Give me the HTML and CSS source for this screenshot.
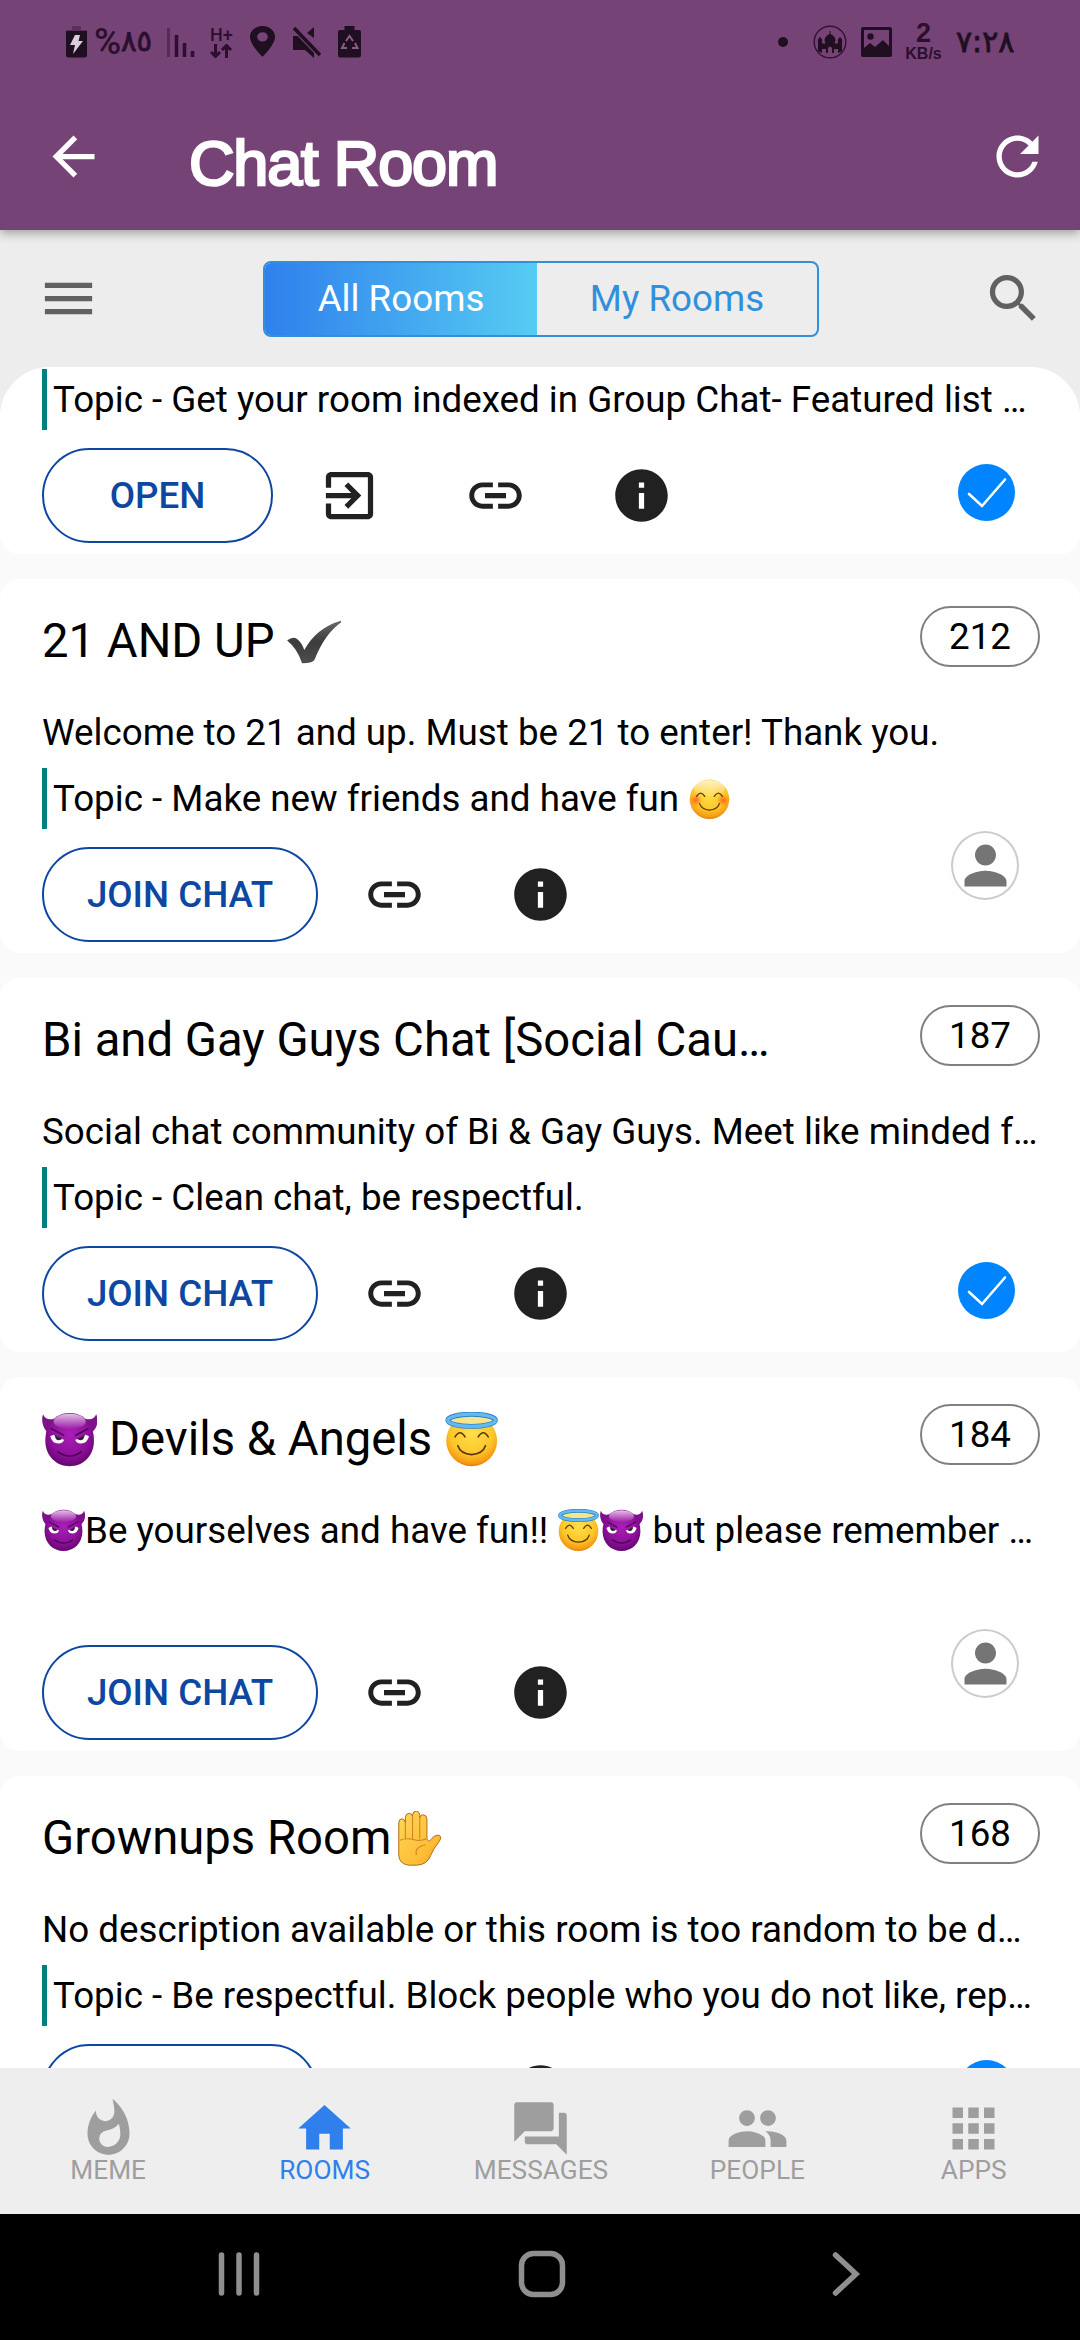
FILE: index.html
```html
<!DOCTYPE html>
<html lang="en">
<head>
<meta charset="utf-8">
<title>Chat Room</title>
<link rel="stylesheet" href="styles.css">
</head>
<body>
<svg class="defs" width="0" height="0" aria-hidden="true">
  <defs>
    <radialGradient id="g-yellow" cx=".5" cy=".35" r=".7">
      <stop offset="0" stop-color="#ffdf4a"/><stop offset=".6" stop-color="#fcc62a"/><stop offset=".85" stop-color="#f59a12"/><stop offset="1" stop-color="#c8620a"/>
    </radialGradient>
    <linearGradient id="g-shine" x1="0" y1="0" x2="0" y2="1">
      <stop offset="0" stop-color="#fff" stop-opacity=".75"/><stop offset="1" stop-color="#fff" stop-opacity="0"/>
    </linearGradient>
    <radialGradient id="g-blush"><stop offset="0" stop-color="#ff5a1f" stop-opacity=".9"/><stop offset="1" stop-color="#ff6a1f" stop-opacity="0"/></radialGradient>
    <radialGradient id="g-purple" cx=".5" cy=".4" r=".65">
      <stop offset="0" stop-color="#a81fb5"/><stop offset=".6" stop-color="#90109c"/><stop offset="1" stop-color="#5c0467"/>
    </radialGradient>
    <linearGradient id="g-hand" x1="0" y1="0" x2="1" y2="1">
      <stop offset="0" stop-color="#ffd75a"/><stop offset=".7" stop-color="#fdbd35"/><stop offset="1" stop-color="#ee8f1c"/>
    </linearGradient>
    <linearGradient id="g-tick" x1="0" y1="0" x2="0" y2="1">
      <stop offset="0" stop-color="#6a6a6a"/><stop offset=".5" stop-color="#3c3c3c"/><stop offset="1" stop-color="#4e4e4e"/>
    </linearGradient>
  </defs>
  <symbol id="devil" viewBox="0 0 100 100">
    <path d="M2 4C5 12 12 15 22 12L34 10C22 18 14 26 9 36C1 28 -2 14 2 4ZM98 4C95 12 88 15 78 12L66 10C78 18 86 26 91 36C101 28 102 14 98 4Z" fill="#7b1287"/>
    <path d="M50 2C78 2 94 24 94 52C94 80 74 98 50 98S6 80 6 52C6 24 22 2 50 2Z" fill="url(#g-purple)"/>
    <ellipse cx="50" cy="17" rx="29" ry="14" fill="url(#g-shine)"/>
    <path d="M15 44Q18 57 30 57Q38 56 40 50Q28 48 21 41ZM85 44Q82 57 70 57Q62 56 60 50Q72 48 79 41Z" fill="#fff"/>
    <path d="M23 42Q24 51 30 51Q35 51 36 48ZM77 42Q76 51 70 51Q65 51 64 48Z" fill="#33203a"/>
    <path d="M17 30Q27 36 39 42M83 30Q73 36 61 42M29 72Q50 87 71 72" fill="none" stroke="#43034b" stroke-width="2.6" stroke-linecap="round"/>
  </symbol>
  <symbol id="angel" viewBox="0 0 100 100">
    <ellipse cx="50" cy="52" rx="46" ry="46" fill="url(#g-yellow)"/>
    <ellipse cx="50" cy="15" rx="43" ry="11" fill="#f6e48e" stroke="#2b83c4" stroke-width="9"/>
    <ellipse cx="50" cy="15" rx="43" ry="11" fill="none" stroke="#64baf0" stroke-width="6"/>
    <path d="M20 45Q29 30 38 45M62 45Q71 30 80 45M25 61Q30 76 50 77Q70 76 75 61" fill="none" stroke="#5c3510" stroke-width="3" stroke-linecap="round"/>
  </symbol>
  <symbol id="smile" viewBox="0 0 100 100">
    <circle cx="50" cy="52" r="46" fill="url(#g-yellow)"/>
    <ellipse cx="50" cy="27" rx="36" ry="20" fill="url(#g-shine)"/>
    <circle cx="18" cy="54" r="15" fill="url(#g-blush)"/><circle cx="82" cy="54" r="15" fill="url(#g-blush)"/>
    <path d="M20 45Q29 30 39 45M61 45Q71 30 80 45M27 62Q32 76 50 77Q68 76 73 62" fill="none" stroke="#5c3510" stroke-width="3" stroke-linecap="round"/>
  </symbol>
  <symbol id="hand" viewBox="0 0 100 100">
    <path d="M14 66V21Q15 14 20 14Q25 15 26 21V11Q27 4 33 4Q39 5 39 10V7Q40 0 46 0Q52 1 52 8V12Q53 6 59 7Q65 8 65 15V50Q67 58 73 51Q77 45 82 44Q88 42 90 47Q91 50 86 57Q78 66 72 80Q65 98 46 98H32Q15 96 14 80Z" fill="url(#g-hand)" stroke="#b96a18" stroke-width="1.8"/>
    <path d="M26 20V51M39 10V50M52 12V50M16 53Q28 48 42 52Q54 55 64 50M46 80Q42 65 63 61" fill="none" stroke="#cf8425" stroke-width="2"/>
  </symbol>
  <symbol id="tick" viewBox="0 0 100 100">
    <path d="M2 48Q12 40 20 45Q29 52 33 65Q55 25 99 12L100 15Q70 36 52 82Q50 89 29 89Q20 62 2 48Z" fill="url(#g-tick)"/>
  </symbol>
  <symbol id="link" viewBox="0 0 24 24"><path d="M3.900 12c0-1.710 1.390-3.100 3.100-3.100h4V7H7c-2.760 0-5 2.240-5 5s2.240 5 5 5h4v-1.900H7c-1.710 0-3.100-1.390-3.100-3.100zM8 13h8v-2H8v2zm9-6h-4v1.900h4c1.710 0 3.100 1.390 3.100 3.100s-1.390 3.100-3.100 3.100h-4V17h4c2.760 0 5-2.240 5-5s-2.240-5-5-5z"/></symbol>
  <symbol id="info" viewBox="0 0 24 24"><path d="M12 2C6.480 2 2 6.480 2 12s4.480 10 10 10 10-4.480 10-10S17.520 2 12 2zm1 15h-2v-6h2v6zm0-8h-2V7h2v2z"/></symbol>
  <symbol id="enter" viewBox="0 0 24 24"><path d="M10.090 15.590L11.500 17l5-5-5-5-1.410 1.410L12.670 11H3v2h9.670l-2.580 2.590zM19 3H5c-1.110 0-2 .9-2 2v4h2V5h14v14H5v-4H3v4c0 1.100.89 2 2 2h14c1.100 0 2-.9 2-2V5c0-1.100-.9-2-2-2z"/></symbol>
  <symbol id="person" viewBox="0 0 24 24"><path d="M12 12c2.210 0 4-1.790 4-4s-1.790-4-4-4-4 1.790-4 4 1.790 4 4 4zm0 2c-2.670 0-8 1.340-8 4v2h16v-2c0-2.660-5.330-4-8-4z"/></symbol>
  <symbol id="verified" viewBox="0 0 57 57"><circle cx="28.500" cy="28.500" r="28.500" fill="#0084ff"/><path d="M11 30L24 42L47 15.500" fill="none" stroke="#fff" stroke-width="2.600" stroke-linecap="round"/></symbol>
</svg>

<div class="screen">
  <header class="header">
    <div class="status">
      <div class="status-group">
        <svg class="s-battery" viewBox="0 0 21 32"><path d="M6 0h9v4h6v4H0V4h6z" fill="#5a3159"/><path d="M0 5h21v24q0 2.500-2.500 2.500h-16Q0 31.500 0 29z" fill="#200f20"/><path d="M9 9h5l-1.500 6H17L7 28l2-9H4z" fill="#dccddc"/></svg>
        <span class="percent"><span class="sign">%</span><span class="digits">٨٥</span></span>
        <svg class="s-signal" viewBox="0 0 28 32"><path d="M1.500 2v29" stroke="#572a58" stroke-width="3"/><path d="M9.500 9v22M17.500 17v14M25.500 25v6" stroke="#2f0c33" stroke-width="3.500"/></svg>
        <div class="s-net"><span>H+</span><svg viewBox="0 0 22 14"><path d="M5.500 0v12M1 8l4.500 4.500L10 8M16.500 14V2M12 6l4.500-4.500L21 6" fill="none" stroke="#2c0f2f" stroke-width="3"/></svg></div>
        <svg class="s-pin" viewBox="5 2 14 20" preserveAspectRatio="none"><path d="M12 2C8.130 2 5 5.130 5 9c0 5.250 7 13 7 13s7-7.750 7-13c0-3.870-3.130-7-7-7zm0 10a3 3 0 1 1 0-6 3 3 0 0 1 0 6z"/></svg>
        <svg class="s-mute" viewBox="0 0 28 32"><path d="M21 1v11L14 7zM0 10h7l14 14v8l-9-8H0z"/><path d="M1 2L27 29" stroke="#754376" stroke-width="6"/><path d="M1 2L27 29" stroke="#200f20" stroke-width="3.500"/></svg>
        <svg class="s-recycle" viewBox="0 0 23 32"><path d="M6.500 0h10v4H21q2 0 2 2v23q0 2.500-2.500 2.500h-18Q0 31.500 0 29V6q0-2 2-2h4.500z"/><path d="M8 15l3.500-5 3.500 5M17 17l2.500 5H14M9 22H4l2.500-5" fill="none" stroke="#8a5b8b" stroke-width="2"/></svg>
      </div>
      <div class="status-group right">
        <svg class="s-dot" viewBox="0 0 10 10"><circle cx="5" cy="5" r="5"/></svg>
        <svg class="s-mosque" viewBox="0 0 34 34"><circle cx="17" cy="17" r="15.800" fill="none" stroke="#351339" stroke-width="1.500"/><path d="M16.500 6h1v3q5 2.500 5 6.500l-1 3h3.500v-2q-1-2 2-4.500 3 2.500 2 4.500v9.500q-1.500 1-4 2v-4h-4v4h-2v-5q-2-3-4 0v5h-2v-4H9v4q-2.500-1-4-2v-9.500q-1-2 2-4.500 3 2.500 2 4.500v2h3.500l-1-3q0-4 5-6.500z"/></svg>
        <svg class="s-image" viewBox="0 0 31 30"><path fill-rule="evenodd" d="M2 0h27q2 0 2 2v26q0 2-2 2H2q-2 0-2-2V2q0-2 2-2zM3 3v18l6-5 5 4 8-7 6 6V3z"/><circle cx="9.500" cy="9.500" r="3.200"/></svg>
        <div class="speed"><b>2</b><span>KB/s</span></div>
        <span class="clock">٧:٢٨</span>
      </div>
    </div>
    <div class="appbar">
      <svg class="icon" viewBox="0 0 24 24"><path d="M20 11H7.830l5.590-5.590L12 4l-8 8 8 8 1.410-1.410L7.830 13H20v-2z"/></svg>
      <h1 class="app-title">Chat Room</h1>
      <svg class="icon" viewBox="0 0 24 24"><path d="M17.650 6.350C16.200 4.900 14.210 4 12 4c-4.420 0-7.990 3.580-7.990 8s3.570 8 7.990 8c3.730 0 6.840-2.550 7.730-6h-2.080c-.82 2.330-3.040 4-5.650 4-3.310 0-6-2.690-6-6s2.690-6 6-6c1.660 0 3.140.69 4.220 1.780L13 11h7V4l-2.350 2.350z"/></svg>
    </div>
  </header>

  <div class="toolbar">
    <svg class="icon" viewBox="0 0 24 24"><path d="M3 18h18v-2H3v2zm0-5h18v-2H3v2zm0-7v2h18V6H3z"/></svg>
    <div class="segment"><span class="seg active">All Rooms</span><span class="seg">My Rooms</span></div>
    <svg class="icon" viewBox="0 0 24 24"><path d="M15.500 14h-.79l-.28-.27C15.410 12.590 16 11.110 16 9.500 16 5.910 13.090 3 9.500 3S3 5.910 3 9.500 5.910 16 9.500 16c1.610 0 3.090-.59 4.230-1.570l.27.28v.79l5 4.990L20.490 19l-4.990-5zm-6 0C7.010 14 5 11.990 5 9.500S7.010 5 9.500 5 14 7.010 14 9.500 11.990 14 9.500 14z"/></svg>
  </div>

  <main class="list">
    <article class="card scrolled">
      <p class="topic">Topic - Get your room indexed in Group Chat- Featured list …</p>
      <div class="actions">
        <span class="btn open">OPEN</span>
        <div class="tools"><svg class="icon"><use href="#enter"/></svg><svg class="icon"><use href="#link"/></svg><svg class="icon"><use href="#info"/></svg></div>
        <svg class="verified"><use href="#verified"/></svg>
      </div>
    </article>

    <article class="card">
      <div class="head"><h2>21 AND UP <svg class="emoji"><use href="#tick"/></svg></h2><span class="count">212</span></div>
      <p class="desc">Welcome to 21 and up. Must be 21 to enter! Thank you.</p>
      <p class="topic">Topic - Make new friends and have fun <svg class="emoji"><use href="#smile"/></svg></p>
      <div class="actions">
        <span class="btn">JOIN CHAT</span>
        <div class="tools"><svg class="icon"><use href="#link"/></svg><svg class="icon"><use href="#info"/></svg></div>
        <span class="avatar"><svg class="icon"><use href="#person"/></svg></span>
      </div>
    </article>

    <article class="card">
      <div class="head"><h2>Bi and Gay Guys Chat [Social Cau…</h2><span class="count">187</span></div>
      <p class="desc">Social chat community of Bi &amp; Gay Guys. Meet like minded f…</p>
      <p class="topic">Topic - Clean chat, be respectful.</p>
      <div class="actions">
        <span class="btn">JOIN CHAT</span>
        <div class="tools"><svg class="icon"><use href="#link"/></svg><svg class="icon"><use href="#info"/></svg></div>
        <svg class="verified"><use href="#verified"/></svg>
      </div>
    </article>

    <article class="card">
      <div class="head"><h2><svg class="emoji"><use href="#devil"/></svg> Devils &amp; Angels <svg class="emoji"><use href="#angel"/></svg></h2><span class="count">184</span></div>
      <p class="desc"><svg class="emoji"><use href="#devil"/></svg>Be yourselves and have fun!! <svg class="emoji"><use href="#angel"/></svg><svg class="emoji"><use href="#devil"/></svg> but please remember …</p>
      <p class="topic empty"></p>
      <div class="actions">
        <span class="btn">JOIN CHAT</span>
        <div class="tools"><svg class="icon"><use href="#link"/></svg><svg class="icon"><use href="#info"/></svg></div>
        <span class="avatar"><svg class="icon"><use href="#person"/></svg></span>
      </div>
    </article>

    <article class="card">
      <div class="head"><h2>Grownups Room<svg class="emoji"><use href="#hand"/></svg></h2><span class="count">168</span></div>
      <p class="desc">No description available or this room is too random to be d…</p>
      <p class="topic">Topic - Be respectful. Block people who you do not like, rep…</p>
      <div class="actions">
        <span class="btn"></span>
        <div class="tools"><svg class="icon"><use href="#link"/></svg><svg class="icon"><use href="#info"/></svg></div>
        <svg class="verified"><use href="#verified"/></svg>
      </div>
    </article>
  </main>

  <nav class="tabs">
    <div class="tab"><svg class="icon" viewBox="0 0 24 24"><path d="M13.500.67s.74 2.650.74 4.800c0 2.060-1.350 3.730-3.410 3.730-2.070 0-3.630-1.670-3.630-3.730l.03-.36C5.210 7.510 4 10.620 4 14c0 4.420 3.580 8 8 8s8-3.580 8-8C20 8.610 17.410 3.800 13.500.67zM11.710 19c-1.780 0-3.220-1.400-3.220-3.140 0-1.620 1.050-2.760 2.810-3.120 1.770-.36 3.600-1.210 4.620-2.580.39 1.290.59 2.650.59 4.040 0 2.650-2.150 4.800-4.800 4.800z"/></svg><span>MEME</span></div>
    <div class="tab current"><svg class="icon" viewBox="0 0 24 24"><path d="M10 20v-6h4v6h5v-8h3L12 3 2 12h3v8z"/></svg><span>ROOMS</span></div>
    <div class="tab"><svg class="icon" viewBox="0 0 24 24"><path d="M21 6h-2v9H6v2c0 .55.45 1 1 1h11l4 4V7c0-.55-.45-1-1-1zm-4 6V3c0-.55-.45-1-1-1H3c-.55 0-1 .45-1 1v14l4-4h10c.55 0 1-.45 1-1z"/></svg><span>MESSAGES</span></div>
    <div class="tab"><svg class="icon" viewBox="0 0 24 24"><path d="M16 11c1.660 0 2.990-1.340 2.990-3S17.660 5 16 5s-3 1.340-3 3 1.340 3 3 3zm-8 0c1.660 0 2.990-1.340 2.990-3S9.660 5 8 5 5 6.340 5 8s1.340 3 3 3zm0 2c-2.330 0-7 1.170-7 3.500V19h14v-2.500c0-2.330-4.670-3.500-7-3.500zm8 0c-.29 0-.62.02-.97.05 1.160.84 1.970 1.970 1.970 3.450V19h6v-2.500c0-2.330-4.670-3.500-7-3.500z"/></svg><span>PEOPLE</span></div>
    <div class="tab"><svg class="icon" viewBox="0 0 24 24"><path d="M4 8h4V4H4v4zm6 12h4v-4h-4v4zm-6 0h4v-4H4v4zm0-6h4v-4H4v4zm6 0h4v-4h-4v4zm6-10v4h4V4h-4zm-6 4h4V4h-4v4zm6 6h4v-4h-4v4zm0 6h4v-4h-4v4z"/></svg><span>APPS</span></div>
  </nav>

  <div class="sysnav">
    <svg viewBox="0 0 60 50"><path d="M12.500 6v38M30 6v38M47.500 6v38"/></svg>
    <svg viewBox="0 0 60 50"><rect x="9.500" y="4.500" width="41" height="41" rx="12"/></svg>
    <svg viewBox="0 0 60 50"><path d="M20.500 6L41 25L20.500 44"/></svg>
  </div>
</div>
</body>
</html>
```

FILE: styles.css
```css
* { box-sizing: border-box; margin: 0; padding: 0; }
body { width: 1080px; height: 2340px; overflow: hidden; background: #ededed; font-family: Roboto, "Noto Sans", sans-serif; font-size: 36.75px; color: #000; }
.defs { position: absolute; }
svg { display: block; flex: none; }
.screen { display: flex; flex-direction: column; height: 2340px; }
.icon { width: 63px; height: 63px; fill: currentColor; }

/* header */
.header { height: 230px; background: #754376; position: relative; z-index: 1; box-shadow: 0 3px 10px rgba(0, 0, 0, .35); }
.status { height: 83px; display: flex; justify-content: space-between; padding: 0 66px; color: #200f20; fill: #200f20; }
.status-group { display: flex; align-items: center; }
.s-battery { width: 21px; height: 32px; margin-right: 7px; }
.percent { width: 59px; height: 40px; margin-right: 14px; display: flex; color: #2c0f2f; line-height: 40px; white-space: nowrap; direction: ltr; }
.sign { width: 27px; font-size: 37px; font-weight: 500; }
.digits { font-family: "DejaVu Sans", sans-serif; font-size: 29px; line-height: 38px; unicode-bidi: bidi-override; -webkit-text-stroke: .8px #2c0f2f; }
.s-signal { width: 28px; height: 32px; margin-right: 15px; }
.s-net { width: 22px; margin-right: 18px; height: 32px; color: #2c0f2f; font: 500 18px/17px Roboto, sans-serif; display: flex; flex-direction: column; justify-content: space-between; }
.s-net svg { width: 22px; height: 14px; }
.s-pin { width: 25px; height: 31px; margin-right: 18px; }
.s-mute { width: 28px; height: 32px; margin-right: 17px; }
.s-recycle { width: 23px; height: 32px; }
.s-dot { width: 10px; height: 10px; margin-right: 25px; }
.s-mosque { width: 34px; height: 34px; margin-right: 14px; }
.s-image { width: 31px; height: 30px; margin-right: 13px; }
.speed { width: 37px; margin-right: 14px; display: flex; flex-direction: column; align-items: center; font-family: "Liberation Sans", sans-serif; font-weight: bold; color: #2c0f2f; }
.speed b { font-size: 27px; line-height: 24px; }
.speed span { font-size: 16px; line-height: 17px; }
.clock { width: 58px; font: 30px/38px "DejaVu Sans", sans-serif; white-space: nowrap; direction: ltr; unicode-bidi: bidi-override; -webkit-text-stroke: .8px #200f20; }
.appbar { height: 147px; display: flex; align-items: center; padding: 0 31px 0 42px; color: #fff; }
.app-title { flex: 1; padding: 13px 0 0 84px; font: 400 63px/70px "Liberation Sans", sans-serif; letter-spacing: -1.15px; -webkit-text-stroke: 2.6px #fff; }

/* toolbar */
.toolbar { height: 137px; flex: none; display: flex; align-items: center; justify-content: space-between; padding: 0 35px 0 37px; color: #616161; }
.segment { width: 556px; height: 76px; display: flex; border: 2px solid #3190dc; border-radius: 8px; overflow: hidden; font-size: 36.75px; line-height: 72px; text-align: center; color: #3190dc; }
.seg { flex: 1; }
.seg.active { flex: 0 0 272px; color: #fff; background: linear-gradient(90deg, #2f80ed, #56ccf2); }

/* room list */
.list { height: 1701px; flex: none; overflow: hidden; background: #fafafa; border-radius: 50px 50px 0 0; display: flex; flex-direction: column; gap: 25px; }
.card { height: 374px; flex: none; background: #fff; border-radius: 20px; padding: 27px 40px 0 42px; }
.card.scrolled { height: 187px; padding-top: 2px; }
.head { height: 70px; display: flex; justify-content: space-between; margin-bottom: 26px; }
.head h2 { font-size: 47.25px; font-weight: 400; line-height: 70px; white-space: nowrap; }
.count { width: 120px; height: 61px; border: 2px solid #808080; border-radius: 31px; text-align: center; line-height: 58px; }
.desc, .topic { height: 61px; line-height: 61px; white-space: nowrap; }
.desc { margin-bottom: 5px; }
.topic { border-left: 5px solid #008080; padding-left: 6px; margin-bottom: 18px; }
.topic.empty { border-color: transparent; }
.emoji { display: inline-block; width: 1.17em; height: 1.17em; vertical-align: -.25em; }
.actions { height: 95px; display: flex; align-items: center; color: #212121; }
.btn { width: 276px; height: 95px; flex: none; border: 2px solid #0d47a1; border-radius: 48px; color: #0d47a1; font-weight: 500; line-height: 91px; text-align: center; }
.btn.open { width: 231px; }
.tools { display: flex; gap: 83px; margin-left: 45px; }
.verified { width: 57px; height: 57px; margin: 0 25px 7px auto; }
.avatar { width: 68px; height: 69px; margin: 0 21px 59px auto; border: 2px solid #ccc; border-radius: 50%; color: #757575; display: flex; align-items: center; justify-content: center; }

/* bottom tabs */
.tabs { height: 146px; flex: none; display: flex; background: #eee; }
.tab { flex: 0 0 216.4px; display: flex; flex-direction: column; align-items: center; padding-top: 29px; color: #9e9e9e; font-size: 26.25px; line-height: 30px; }
.tab span { margin-top: -5px; }
.tab.current { color: #2f80ed; }

/* system navigation */
.sysnav { height: 126px; flex: none; background: #000; display: flex; justify-content: center; gap: 243px; padding: 35px 0 0 3px; fill: none; stroke: #8f8f8f; stroke-width: 5.5; stroke-linecap: round; }
.sysnav svg { width: 60px; height: 50px; }
```
